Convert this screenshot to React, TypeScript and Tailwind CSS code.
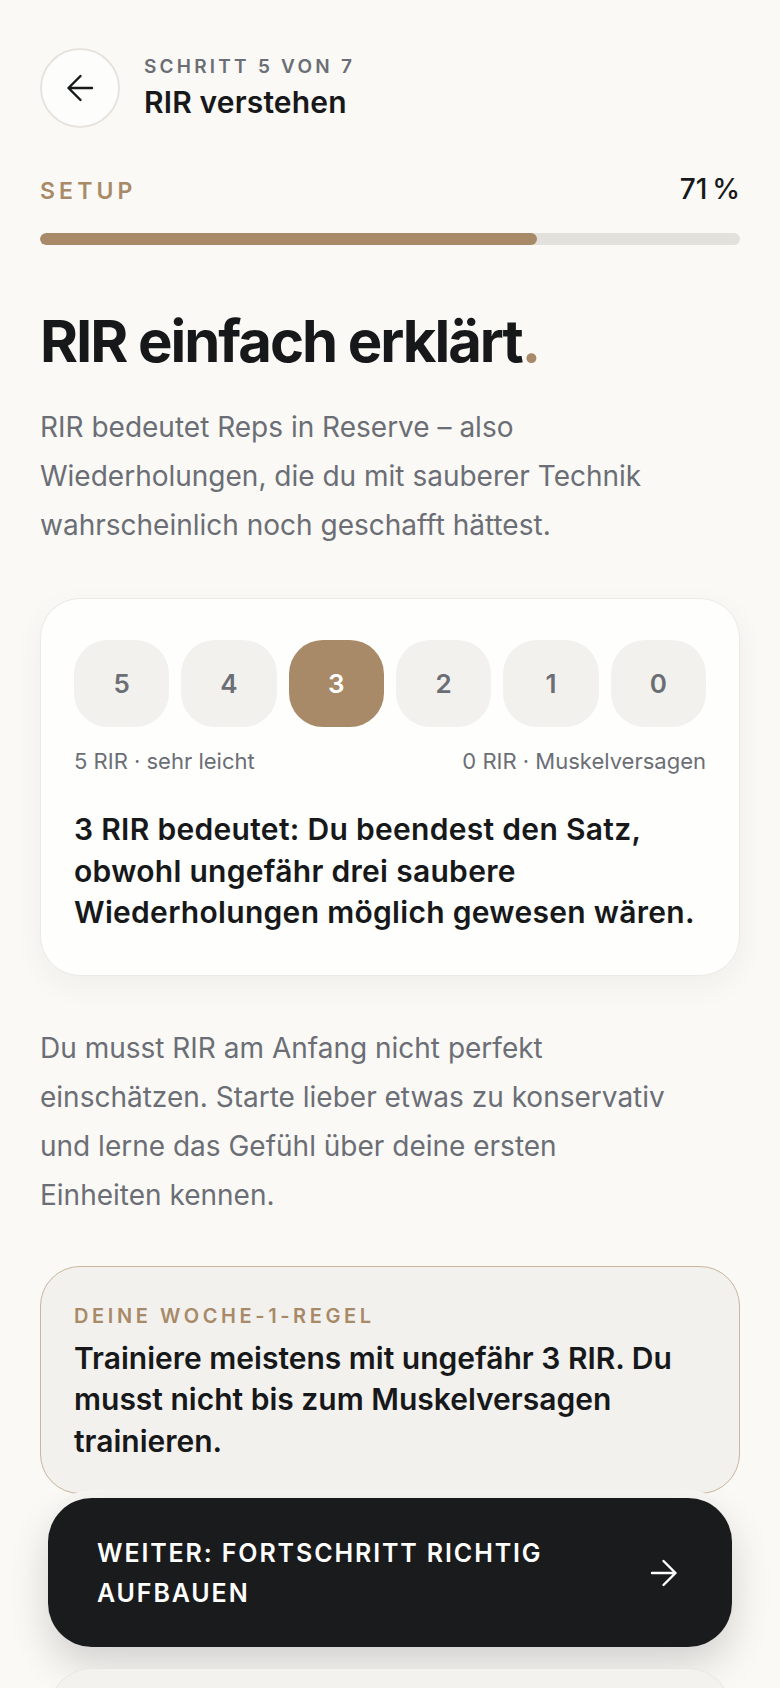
import { ReactNode } from "react";

/**
 * Onboarding step 5/7 — "RIR verstehen".
 * Header with back button, setup progress, RIR scale card, week-1 rule,
 * and a sticky CTA at the bottom.
 */

const scale = [5, 4, 3, 2, 1, 0];
const selected = 3;

function Arrow({ dir, className }: { dir: "left" | "right"; className?: string }) {
  const d = dir === "left" ? "M26 14H2.5 M14.5 2 2.5 14l12 12" : "M2 14h23.5 M13.5 2l12 12-12 12";
  return (
    <svg width="28" height="28" viewBox="0 0 28 28" fill="none" className={className}>
      <path d={d} stroke="currentColor" strokeWidth="2.4" strokeLinecap="round" strokeLinejoin="round" />
    </svg>
  );
}

function Body({ children, className = "" }: { children: ReactNode; className?: string }) {
  return <p className={`text-[28px] leading-[49px] text-[#6B6E75] ${className}`}>{children}</p>;
}

export default function App() {
  return (
    <div className="min-h-screen bg-[#FAF9F6] font-['Inter',sans-serif] text-[#17181A]">
      <div className="px-10 pt-12 pb-[260px]">
        {/* Header */}
        <header className="flex items-center gap-6">
          <button
            type="button"
            aria-label="Zurück"
            className="flex h-20 w-20 shrink-0 items-center justify-center rounded-full border-2 border-[#E7E4DF] bg-[#FDFDFC] text-[#17181A]"
          >
            <Arrow dir="left" />
          </button>
          <div className="flex flex-col gap-2">
            <p className="text-[19px] leading-none font-semibold uppercase tracking-[0.17em] text-[#6B6E75]">
              Schritt 5 von 7
            </p>
            <h2 className="text-[30px] leading-[36px] font-semibold tracking-[0.005em]">RIR verstehen</h2>
          </div>
        </header>

        {/* Progress */}
        <div className="mt-[47px] flex items-baseline justify-between">
          <span className="text-[23px] leading-none font-semibold uppercase tracking-[0.18em] text-[#A88A68]">
            Setup
          </span>
          <span className="text-[28px] leading-none font-medium">71&#8239;%</span>
        </div>
        <div className="mt-[30px] h-3 w-full overflow-hidden rounded-full bg-[#E3E1DC]">
          <div className="h-full rounded-full bg-[#A88A68]" style={{ width: "71%" }} />
        </div>

        {/* Title */}
        <h1 className="mt-[67px] text-[58px] leading-none font-bold tracking-[-0.035em]">
          RIR einfach erklärt<span className="text-[#A88A68]">.</span>
        </h1>
        <Body className="mt-[33px]">
          RIR bedeutet Reps in Reserve – also
          <br />
          Wiederholungen, die du mit sauberer Technik
          <br />
          wahrscheinlich noch geschafft hättest.
        </Body>

        {/* Scale card */}
        <section className="mt-[48px] rounded-[40px] border border-[#ECEAE5] bg-[#FEFEFD] px-[33px] pt-[41px] pb-[41px] shadow-[0_10px_30px_rgba(40,30,20,0.05)]">
          <div className="grid grid-cols-6 gap-3">
            {scale.map((n) => (
              <div
                key={n}
                className={`flex h-[87px] items-center justify-center rounded-[34px] text-[26px] font-semibold ${
                  n === selected ? "bg-[#A88A68] text-white" : "bg-[#F2F1EE] text-[#6B6E75]"
                }`}
              >
                {n}
              </div>
            ))}
          </div>
          <div className="mt-[23px] flex justify-between text-[22px] leading-none text-[#6B6E75]">
            <span>5 RIR · sehr leicht</span>
            <span>0 RIR · Muskelversagen</span>
          </div>
          <p className="mt-[37px] text-[30px] leading-[41.5px] font-semibold tracking-[0.01em]">
            3 RIR bedeutet: Du beendest den Satz, obwohl ungefähr drei saubere Wiederholungen möglich gewesen wären.
          </p>
        </section>

        <Body className="mt-[48px]">
          Du musst RIR am Anfang nicht perfekt
          <br />
          einschätzen. Starte lieber etwas zu konservativ
          <br />
          und lerne das Gefühl über deine ersten
          <br />
          Einheiten kennen.
        </Body>

        {/* Week-1 rule */}
        <section className="mt-[46px] rounded-[40px] border-[1.5px] border-[#C9B69D] bg-[#F2F1EE] px-[33px] pt-[39px] pb-[31px]">
          <p className="text-[20px] leading-none font-semibold uppercase tracking-[0.18em] text-[#A88A68]">
            Deine Woche-1-Regel
          </p>
          <p className="mt-3 text-[30px] leading-[41.5px] font-semibold">
            Trainiere meistens mit ungefähr 3 RIR. Du musst nicht bis zum Muskelversagen trainieren.
          </p>
        </section>
      </div>

      {/* Sticky CTA */}
      <div className="fixed inset-x-0 bottom-0 h-[198px] overflow-hidden px-12">
        <div className="rounded-[44px] bg-[#F8F7F4] pt-2">
          <button
            type="button"
            className="flex h-[149px] w-full items-center gap-6 rounded-[44px] bg-[#1A1B1D] pl-[49px] pr-[54px] text-left text-white shadow-[0_18px_40px_rgba(0,0,0,0.16)]"
          >
            <span className="flex-1 text-[25px] leading-[40px] font-semibold uppercase tracking-[0.075em]">
              Weiter: Fortschritt richtig aufbauen
            </span>
            <Arrow dir="right" className="shrink-0" />
          </button>
        </div>
        <div className="mt-[21px] h-[60px] rounded-t-[44px] border border-[#E8E6E1] bg-[#F3F2EF]" />
      </div>
    </div>
  );
}
